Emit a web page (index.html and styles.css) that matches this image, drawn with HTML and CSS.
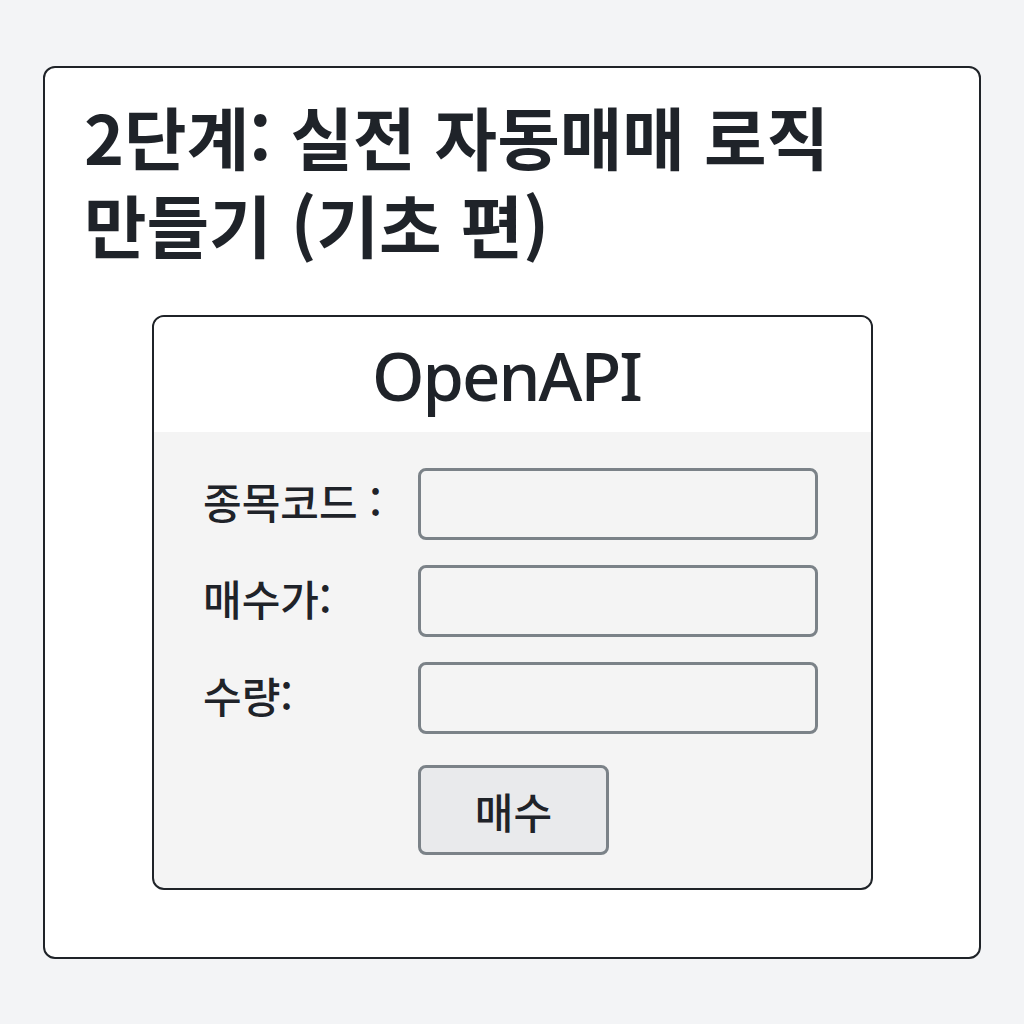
FILE: index.html
```
<!DOCTYPE html>
<html lang="ko">
<head>
    <meta charset="UTF-8">
    <meta name="viewport" content="width=device-width, initial-scale=1.0">
    <title>2단계: 실전 자동매매 로직 만들기</title>
    <link rel="stylesheet" href="styles.css">
</head>
<body>
    <div class="page-card">
        <h1 class="page-title">2단계: 실전 자동매매 로직<br>만들기 (기초 편)</h1>
        <div class="api-box">
            <div class="api-header">OpenAPI</div>
            <form class="order-form">
                <label for="code">종목코드 :</label>
                <input type="text" id="code" name="code">
                <label for="price">매수가:</label>
                <input type="text" id="price" name="price">
                <label for="qty">수량:</label>
                <input type="text" id="qty" name="qty">
                <span></span>
                <div class="btn-row">
                    <button type="button">매수</button>
                </div>
            </form>
        </div>
    </div>
</body>
</html>
```
FILE: styles.css
```
body {
    font-family: "Noto Sans CJK KR", "Noto Sans", sans-serif;
    margin: 0;
    background-color: #f3f4f6;
    color: #1f2329;
}
.page-card {
    box-sizing: border-box;
    width: 938px;
    height: 893px;
    margin: 66px 0 0 43px;
    padding: 24px 0 0 39px;
    background-color: #fff;
    border: 2px solid #1f2328;
    border-radius: 12px;
}
.page-title {
    margin: 0;
    font-size: 68px;
    font-weight: 700;
    line-height: 88px;
}
.api-box {
    box-sizing: border-box;
    width: 721px;
    margin: 47px 0 0 68px;
    border: 2px solid #1f2328;
    border-radius: 12px;
    overflow: hidden;
    background-color: #f4f4f4;
}
.api-header {
    height: 115px;
    display: flex;
    align-items: center;
    justify-content: center;
    padding-right: 12px;
    background-color: #fff;
    font-family: "Noto Sans", sans-serif;
    font-size: 67px;
    font-weight: 500;
    letter-spacing: -2px;
}
.order-form {
    display: grid;
    grid-template-columns: 215px 400px;
    row-gap: 25px;
    padding: 36px 0 33px 49px;
    align-items: center;
}
.order-form label {
    font-size: 42px;
    font-weight: 500;
    padding-bottom: 8px;
}
.order-form input {
    box-sizing: border-box;
    height: 72px;
    width: 400px;
    border: 3px solid #7b8288;
    border-radius: 8px;
    background-color: #f4f4f4;
}
.btn-row {
    padding-top: 6px;
}
.btn-row button {
    box-sizing: border-box;
    width: 191px;
    height: 90px;
    border: 3px solid #7b8288;
    border-radius: 8px;
    background-color: #e9eaec;
    font-family: "Noto Sans CJK KR", sans-serif;
    font-size: 42px;
    font-weight: 500;
    color: #1f2329;
}
```
